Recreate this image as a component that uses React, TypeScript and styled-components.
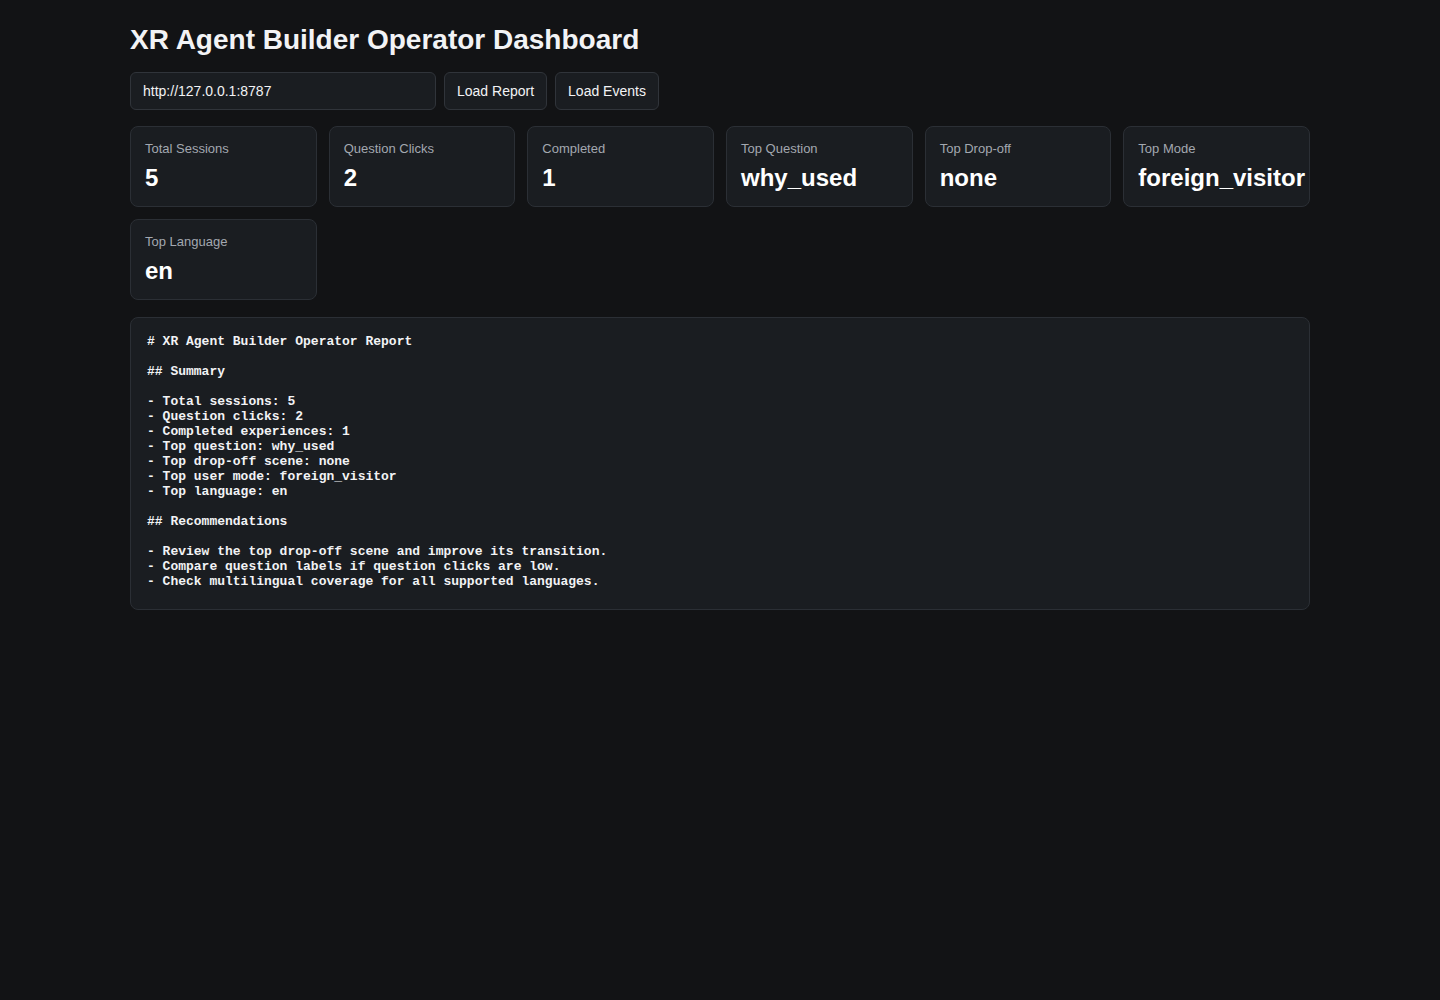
import React from 'react';
import styled, { createGlobalStyle } from 'styled-components';

const GlobalStyle = createGlobalStyle`
  html, body {
    margin: 0;
    background: #121315;
    color: #f2f3f5;
    font-family: "Liberation Sans", Arial, sans-serif;
  }
  * { box-sizing: border-box; }
`;

const Page = styled.main`
  max-width: 1180px;
  margin: 0 auto;
  padding: 24px 0;
`;

const Title = styled.h1`
  font-size: 28px;
  line-height: 32px;
  font-weight: 700;
  margin: 0 0 16px;
`;

const Toolbar = styled.div`
  display: flex;
  gap: 8px;
  margin-bottom: 16px;
`;

const UrlInput = styled.input`
  width: 306px;
  height: 38px;
  padding: 0 12px;
  background: #1a1d21;
  color: #f2f3f5;
  border: 1px solid #30343a;
  border-radius: 6px;
  font-family: "Liberation Sans", Arial, sans-serif;
  font-size: 14px;
  outline: none;
`;

const Button = styled.button`
  height: 38px;
  padding: 0 12px;
  background: #1a1d21;
  color: #f2f3f5;
  border: 1px solid #30343a;
  border-radius: 6px;
  font-family: "Liberation Sans", Arial, sans-serif;
  font-size: 14px;
  cursor: pointer;
`;

const Stats = styled.section`
  display: grid;
  grid-template-columns: repeat(6, minmax(0, 1fr));
  gap: 12px;
  margin-bottom: 17px;
`;

const Card = styled.div`
  height: 81px;
  padding: 14px;
  background: #1a1d21;
  border: 1px solid #2b2f35;
  border-radius: 8px;
  overflow: visible;
`;

const Label = styled.div`
  font-size: 13px;
  line-height: 16px;
  color: #a3a8b0;
  margin-bottom: 6px;
`;

const Value = styled.div`
  font-size: 24px;
  line-height: 30px;
  font-weight: 700;
  color: #ffffff;
  white-space: nowrap;
`;

const Report = styled.pre`
  margin: 0;
  padding: 16px 16px 20px;
  background: #1a1d21;
  border: 1px solid #2b2f35;
  border-radius: 8px;
  font-family: "Liberation Mono", "Courier New", monospace;
  font-size: 13px;
  line-height: 15px;
  font-weight: 700;
  color: #f2f3f5;
  white-space: pre-wrap;
`;

const stats = [
  { label: 'Total Sessions', value: '5' },
  { label: 'Question Clicks', value: '2' },
  { label: 'Completed', value: '1' },
  { label: 'Top Question', value: 'why_used' },
  { label: 'Top Drop-off', value: 'none' },
  { label: 'Top Mode', value: 'foreign_visitor' },
  { label: 'Top Language', value: 'en' },
];

const report = `# XR Agent Builder Operator Report

## Summary

- Total sessions: 5
- Question clicks: 2
- Completed experiences: 1
- Top question: why_used
- Top drop-off scene: none
- Top user mode: foreign_visitor
- Top language: en

## Recommendations

- Review the top drop-off scene and improve its transition.
- Compare question labels if question clicks are low.
- Check multilingual coverage for all supported languages.`;

export default function App() {
  return (
    <>
      <GlobalStyle />
      <Page>
        <Title>XR Agent Builder Operator Dashboard</Title>
        <Toolbar>
          <UrlInput defaultValue="http://127.0.0.1:8787" />
          <Button>Load Report</Button>
          <Button>Load Events</Button>
        </Toolbar>
        <Stats>
          {stats.map((s) => (
            <Card key={s.label}>
              <Label>{s.label}</Label>
              <Value>{s.value}</Value>
            </Card>
          ))}
        </Stats>
        <Report>{report}</Report>
      </Page>
    </>
  );
}
